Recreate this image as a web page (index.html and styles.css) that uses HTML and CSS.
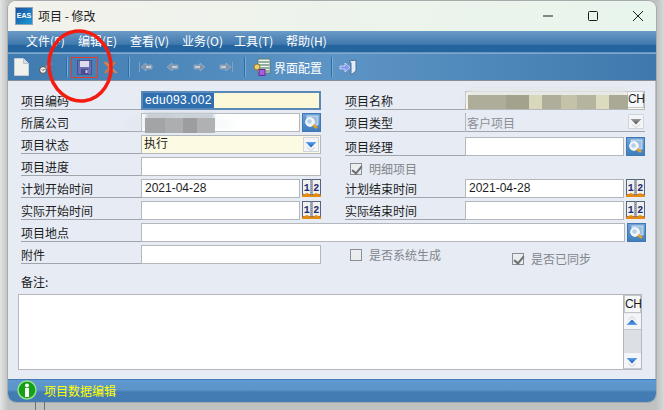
FILE: index.html
```html
<!DOCTYPE html>
<html lang="zh-CN">
<head>
<meta charset="utf-8">
<title>项目 - 修改</title>
<link rel="stylesheet" href="styles.css">
</head>
<body>
<svg class="defs" width="0" height="0" aria-hidden="true">
  <defs>
    <linearGradient id="btnblue" x1="0" y1="0" x2="0" y2="1"><stop offset="0" stop-color="#6fa3d6"/><stop offset="1" stop-color="#3e7cbc"/></linearGradient>
    <linearGradient id="arrow" x1="0" y1="0" x2="0" y2="1"><stop offset="0" stop-color="#5fa4ea"/><stop offset="1" stop-color="#1358b8"/></linearGradient>
    <symbol id="search" viewBox="0 0 19 19">
      <rect x=".5" y=".5" width="18" height="18" fill="url(#btnblue)" stroke="#3f78b4"/>
      <rect x="5" y="3" width="11" height="9" fill="#9dbfe0" stroke="#dfeaf5" stroke-width=".8"/>
      <circle cx="8" cy="9" r="4.300" fill="#eef4fb" stroke="#fff"/>
      <circle cx="7.500" cy="8.500" r="2.300" fill="#b6d0ea"/>
      <path d="M11 12l4 3" stroke="#e8a020" stroke-width="2.600"/>
    </symbol>
    <symbol id="cal" viewBox="0 0 19 19">
      <rect x=".5" y=".5" width="8.500" height="15" fill="#f0f1ee" stroke="#56647e"/>
      <rect x="10" y=".5" width="8.500" height="15" fill="#f0f1ee" stroke="#56647e"/>
      <path d="M0 18v-2l5-2 4 2h1l4-2 5 2v2z" fill="#e58a10"/>
      <path d="M9.500 2v13" stroke="#aab0ba" stroke-dasharray="1 1"/>
      <text x="4.800" y="11.500" class="cal-num">1</text>
      <text x="14.300" y="11.500" class="cal-num">2</text>
    </symbol>
    <symbol id="down" viewBox="0 0 16 16">
      <path d="M2.500 5h11L8 10.500z" fill="url(#arrow)"/>
      <path d="M4 10.500l4 3 4-3" fill="none" stroke="#cdd3da"/>
    </symbol>
    <symbol id="nav" viewBox="0 0 12 10">
      <path d="M0 5l5-4v2h6v4H5v2z" fill="#7f95ad" stroke="#a9b7c6" stroke-width=".6"/>
      <path d="M5 4h5v2H5" fill="#c6ccd4"/>
    </symbol>
  </defs>
</svg>

<div class="desktop">
  <div class="window">
    <header class="titlebar">
      <span class="appicon">EAS</span>
      <span class="title">项目 - 修改</span>
      <div class="winbtns">
        <svg class="winbtn" viewBox="0 0 12 12"><path d="M1 6h10" stroke="#1a1a1a" fill="none"/></svg>
        <svg class="winbtn" viewBox="0 0 12 12"><rect x="1.500" y="1.500" width="9" height="9" rx="1" fill="none" stroke="#1a1a1a"/></svg>
        <svg class="winbtn" viewBox="0 0 12 12"><path d="M1 1l10 10M11 1L1 11" stroke="#1a1a1a" fill="none"/></svg>
      </div>
    </header>

    <nav class="menubar">
      <span class="menu">文件(F)</span>
      <span class="menu">编辑(E)</span>
      <span class="menu">查看(V)</span>
      <span class="menu">业务(O)</span>
      <span class="menu">工具(T)</span>
      <span class="menu">帮助(H)</span>
    </nav>

    <div class="toolbar">
      <span class="tool tool-new"><svg width="15" height="18" viewBox="0 0 15 18"><path d="M.5.500h9l5 5v12H.5z" fill="#f0f0ec" stroke="#c4ccd4"/><path d="M9.500.500v5h5" fill="#d8dde2" stroke="#b8c0c8"/></svg></span>
      <span class="tool tool-open"><svg width="14" height="14" viewBox="0 0 14 14"><circle cx="4" cy="10" r="3.400" fill="#f3f3f3" stroke="#4a4a4a"/><path d="M3 9.500l1 1 1.500-1.500" stroke="#333" fill="none"/><path d="M6 7l5-5 2 2-5 5z" fill="#8d97a2"/></svg></span>
      <span class="sep sep-a"></span>
      <span class="tool tool-save"><svg width="15" height="15" viewBox="0 0 15 15"><path d="M.5.500h14v14H.5z" fill="#6a6cb4" stroke="#4a4c8c"/><rect x="3" y="1" width="9" height="6" fill="#dcdcec"/><rect x="4" y="9" width="7" height="5" fill="#4a4c90"/><rect x="8.500" y="10" width="2" height="3" fill="#c8c8e0"/></svg></span>
      <span class="tool tool-x"><svg width="15" height="13" viewBox="0 0 15 13"><path d="M1 1l12 11M12 1L2 12" stroke="#e0733a" stroke-width="2" fill="none"/><path d="M3 1l11 11" stroke="#c9a080" fill="none"/></svg></span>
      <span class="sep sep-b"></span>
      <span class="tool tool-first"><svg width="14" height="10" viewBox="0 0 14 10"><path d="M.5 0v10" stroke="#8ba0b6"/><use href="#nav" x="2" width="12" height="10"/></svg></span>
      <span class="tool tool-prev"><svg width="12" height="10"><use href="#nav" width="12" height="10"/></svg></span>
      <span class="tool tool-next"><svg class="flip" width="12" height="10"><use href="#nav" width="12" height="10"/></svg></span>
      <span class="tool tool-last"><svg class="flip" width="14" height="10" viewBox="0 0 14 10"><path d="M.5 0v10" stroke="#8ba0b6"/><use href="#nav" x="2" width="12" height="10"/></svg></span>
      <span class="sep sep-c"></span>
      <span class="tool tool-cfg">
        <svg width="18" height="18" viewBox="0 0 18 18"><rect x="5" y="1" width="12" height="14" fill="#f4f6f2" stroke="#5d7a70"/><path d="M6 4h10M6 7h10M6 10h10M6 13h10" stroke="#2f6b4a"/><circle cx="4" cy="9" r="3" fill="#e9cf6a" stroke="#8d7a30"/><rect x="6" y="11.500" width="6" height="6" fill="#a45ed8" stroke="#6a2a9a"/></svg>
        <span class="tool-text">界面配置</span>
      </span>
      <span class="sep sep-d"></span>
      <span class="tool tool-exit"><svg width="18" height="17" viewBox="0 0 18 17"><path d="M10 2l7-1v11l-5 4V4z" fill="#e4edf7" stroke="#4c6f96"/><path d="M1 7h5V4l5 4.500L6 13v-3H1z" fill="#8494f0" stroke="#e6ebfc" stroke-width=".7"/></svg></span>
    </div>

    <main class="form">
      <div class="grid">
        <label class="lbl">项目编码</label>
        <div class="ctrl"><div class="field field-focus"><span class="selected">edu093.002</span></div></div>
        <label class="lbl lbl-right">项目名称</label>
        <div class="ctrl ctrl-name"><div class="field field-yellow"></div><span class="ch ch-name">CH</span></div>

        <label class="lbl">所属公司</label>
        <div class="ctrl"><div class="field"></div><svg class="pick"><use href="#search"/></svg></div>
        <label class="lbl lbl-right">项目类型</label>
        <div class="ctrl ctrl-flat"><div class="field field-plain">客户项目</div><span class="combo combo-grey"><svg width="16" height="16"><use href="#down"/></svg></span></div>

        <label class="lbl">项目状态</label>
        <div class="ctrl"><div class="field field-yellow combo-field">执行<span class="combo"><svg width="16" height="16"><use href="#down"/></svg></span></div></div>
        <label class="lbl lbl-right lbl-low">项目经理</label>
        <div class="ctrl ctrl-low"><div class="field"></div><svg class="pick"><use href="#search"/></svg></div>

        <label class="lbl">项目进度</label>
        <div class="ctrl"><div class="field"></div></div>
        <div class="check check-detail"><span class="box checked"></span>明细项目</div>

        <label class="lbl lbl-first">计划开始时间</label>
        <div class="ctrl"><div class="field">2021-04-28</div><svg class="pick"><use href="#cal"/></svg></div>
        <label class="lbl lbl-right">计划结束时间</label>
        <div class="ctrl"><div class="field">2021-04-28</div><svg class="pick"><use href="#cal"/></svg></div>

        <label class="lbl">实际开始时间</label>
        <div class="ctrl"><div class="field"></div><svg class="pick"><use href="#cal"/></svg></div>
        <label class="lbl lbl-right">实际结束时间</label>
        <div class="ctrl"><div class="field"></div><svg class="pick"><use href="#cal"/></svg></div>

        <label class="lbl">项目地点</label>
        <div class="ctrl ctrl-span"><div class="field"></div><svg class="pick"><use href="#search"/></svg></div>

        <label class="lbl">附件</label>
        <div class="ctrl"><div class="field"></div></div>
        <div class="checks">
          <div class="check check-sys"><span class="box"></span>是否系统生成</div>
          <div class="check check-sync"><span class="box checked"></span>是否已同步</div>
        </div>
      </div>

      <div class="remark-label">备注:</div>
      <div class="remark">
        <div class="remark-area"></div>
        <div class="scroll">
          <span class="ch ch-remark">CH</span>
          <span class="sbtn sbtn-up"><svg width="16" height="16"><use href="#down"/></svg></span>
          <span class="strack"></span>
          <span class="sbtn sbtn-down"><svg width="16" height="16"><use href="#down"/></svg></span>
        </div>
      </div>
    </main>

    <footer class="statusbar">
      <svg class="info" viewBox="0 0 20 20"><circle cx="10" cy="10" r="9" fill="#16a016" stroke="#8fe08f" stroke-width="1.500"/><rect x="8" y="8" width="4" height="9" fill="#fff"/><circle cx="10" cy="5.500" r="2" fill="#fff"/></svg>
      <span class="status-text">项目数据编辑</span>
    </footer>
  </div>
  <div class="taskbar-lines"></div>
</div>

<div class="mosaic mosaic-company"></div>
<div class="mosaic mosaic-name"></div>
<svg class="annot" width="664" height="410" viewBox="0 0 664 410"><ellipse cx="80" cy="66" rx="31" ry="35" transform="rotate(-8 80 66)" fill="none" stroke="#f41c10" stroke-width="3.500"/></svg>
</body>
</html>
```
FILE: styles.css
```css
* { box-sizing: border-box; }
html, body { margin: 0; padding: 0; }
body {
  position: relative;
  width: 664px;
  height: 410px;
  overflow: hidden;
  font: 12px/19px "Noto Sans CJK SC", "Liberation Sans", sans-serif;
  color: #1c1c1c;
  background: #c6c9c8;
}
.defs { position: absolute; }
.desktop {
  height: 410px;
  padding: 1px 8px 0;
  background: linear-gradient(90deg, #e3e5e4 0, #bfc2c1 8px, #bfc2c1 656px, #d6d8d7 100%);
}
.window {
  display: flex;
  flex-direction: column;
  width: 648px;
  height: 401px;
  border-radius: 8px;
  overflow: hidden;
  box-shadow: 0 0 0 1px #a8abab;
  background: #e6ebf4;
}
.titlebar {
  display: flex;
  align-items: center;
  flex: 0 0 30px;
  padding: 0 0 1px 8px;
  background: linear-gradient(90deg, #f3f2ec 0, #eef3ec 40%, #e8f5ec 100%);
}
.appicon {
  width: 16px;
  height: 16px;
  font: bold 7px/16px "Liberation Sans", sans-serif;
  text-align: center;
  color: #fff;
  background: linear-gradient(135deg, #1e4f9c, #1a9ad8);
  outline: 1px solid #8fa3b8;
}
.title { margin-left: 6px; font-size: 12px; color: #222; }
.winbtns { display: flex; margin-left: auto; padding-right: 12px; }
.winbtn { width: 12px; height: 12px; margin-left: 33px; }

.menubar {
  display: flex;
  flex: 0 0 23px;
  padding-left: 18px;
  color: #fff;
  line-height: 20px;
  background: linear-gradient(180deg, #6b9ac6 0, #4079ae 58%, #24659f 62%, #24659f 92%, #7fa8cc 94%, #7fa8cc 100%);
}
.menu { width: 52px; white-space: nowrap; }

.toolbar {
  display: flex;
  align-items: center;
  flex: 0 0 27px;
  background: linear-gradient(90deg, #3f7ab0 0, #5c95c5 50%, #3f78ac 100%);
  border-bottom: 1px solid #8c8f92;
}
.tool { display: flex; align-items: center; justify-content: center; height: 21px; }
.tool-new { width: 26px; }
.tool-open { width: 24px; }
.tool-save { width: 27px; border: 1px solid #e53a30; }
.tool-x { width: 24px; }
.tool-first { width: 28px; margin-left: 3px; }
.tool-prev { width: 25px; }
.tool-next { width: 28px; }
.tool-last { width: 26px; }
.tool-cfg { margin-left: 8px; justify-content: flex-start; }
.tool-exit { margin-left: 7px; }
.tool-text { margin-left: 3px; color: #fff; font-size: 12px; }
.flip { transform: scaleX(-1); }
.sep { width: 1px; height: 20px; background: #2a6ea8; box-shadow: 1px 0 0 #7cabd2; }
.sep-a { margin: 0 4px 0 8px; }
.sep-b { margin-left: 6px; }
.sep-c { margin-left: 5px; }
.sep-d { margin-left: 9px; }

.form { flex: 1; padding: 10px 14px 0 10px; border-right: 1px solid #bcc0c4; }
.grid {
  display: grid;
  grid-template-columns: 120px 180px 24px 120px 180px;
  grid-auto-rows: 22px;
  margin-left: 3px;
}
.lbl {
  grid-column: 1;
  height: 19px;
  line-height: 19px;
  border-bottom: 1px solid #a0a5ab;
  white-space: nowrap;
}
.lbl-right { grid-column: 4; }
.lbl-low, .ctrl-low { margin-top: 2px; }
.ctrl { display: flex; gap: 2px; height: 19px; }
.field {
  flex: 1;
  min-width: 0;
  height: 19px;
  padding: 0 3px;
  border: 1px solid #b4b8bc;
  background: #fff;
  line-height: 17px;
  font-family: "Liberation Sans", "Noto Sans CJK SC", sans-serif;
}
.field-focus { border: 2px solid #5a89b8; background: #fdf9d8; padding: 0; line-height: 15px; }
.field-yellow { background: #fdfae3; padding-left: 2px; }
.field-plain { border-width: 0 0 0 1px; background: transparent; color: #8c8f92; padding-left: 1px; line-height: 22px; }
.selected { display: inline-block; padding: 0 2px; color: #fff; background: #2f6fb0; letter-spacing: .35px; }
.combo-field { position: relative; }
.combo { position: absolute; right: 1px; top: 1px; width: 16px; height: 15px; background: #f3f5f8; border: 1px solid #d0d5da; }
.combo svg { display: block; margin: -1px 0 0 -1px; }
.ctrl-flat { position: relative; border-bottom: 1px solid #a0a5ab; }
.combo-grey { top: 1px; right: 1px; }
.combo-grey svg { filter: grayscale(1); }
.pick { flex: 0 0 19px; width: 19px; height: 19px; }
.cal-num { font: bold 10px "Liberation Mono", monospace; fill: #1d2a6e; text-anchor: middle; }
.ctrl-span { grid-column: 2 / span 4; margin-right: -1px; }
.ch {
  display: block;
  border: 1px solid #c2c6ca;
  background: #f6f7f9;
  font: 12px/15px "Liberation Sans", sans-serif;
  text-align: center;
}
.ctrl-name { position: relative; }
.ch-name { position: absolute; right: 1px; top: 0; width: 17px; height: 17px; letter-spacing: -.5px; }
.check {
  display: flex;
  align-items: center;
  gap: 7px;
  height: 19px;
  color: #83868a;
  white-space: nowrap;
}
.check-detail { grid-column: 4; padding-left: 5px; margin-top: 2px; }
.checks {
  grid-column: 4 / span 2;
  display: flex;
  height: 19px;
  margin-left: -1px;
  padding-left: 6px;
}
.check-sync { margin: 4px 0 0 71px; }
.box {
  position: relative;
  width: 12px;
  height: 12px;
  border: 1px solid #8b8e92;
  background: #ecedee;
}
.box.checked::after {
  content: "";
  position: absolute;
  left: 3px;
  top: 0;
  width: 4px;
  height: 8px;
  border: solid #6c6f72;
  border-width: 0 2px 2px 0;
  transform: rotate(40deg);
}
.remark-label { height: 19px; margin: 5px 0 0 3px; line-height: 19px; }
.remark { display: flex; margin-top: 3px; width: 624px; height: 76px; }
.remark-area { flex: 1; background: #fff; border: 1px solid #b4b8bc; }
.scroll { display: flex; flex-direction: column; width: 18px; border: 1px solid #b4b8bc; border-left: 0; }
.ch-remark { height: 18px; line-height: 16px; letter-spacing: -.5px; }
.sbtn { display: block; height: 16px; background: #f3f5f8; border-bottom: 1px solid #c6cad0; }
.sbtn svg { display: block; }
.sbtn-up svg { transform: scaleY(-1); }
.sbtn-up { margin-top: 1px; }
.strack { flex: 1; background: #dcdfe3; }

.statusbar {
  display: flex;
  align-items: center;
  flex: 0 0 21px;
  padding: 0 0 2px 9px;
  border-top: 1px solid #3f7cb8;
  background: linear-gradient(180deg, #6099cf 0, #5a94c9 45%, #437cb2 55%, #437cb2 100%);
}
.info { width: 20px; height: 20px; flex: none; }
.status-text { margin-left: 7px; color: #ffff00; }

.taskbar-lines {
  position: absolute;
  left: 35px;
  top: 402px;
  width: 10px;
  height: 8px;
  border-left: 1px solid #6e7071;
  border-right: 1px solid #6e7071;
}
.mosaic { position: absolute; }
.mosaic-company {
  left: 145px;
  top: 118px;
  width: 70px;
  height: 15px;
  background: linear-gradient(90deg, #a3a4a6 0 28%, #adaeb0 28% 55%, #9c9d9f 55% 75%, #b0b1b3 75% 100%);
  box-shadow: -22px -2px 10px -5px #dfe3e8, 22px -2px 10px -5px #eef1f5, 0 -6px 3px -1px #c3cad2;
}
.mosaic-name {
  left: 468px;
  top: 95px;
  width: 160px;
  height: 14px;
  background: linear-gradient(90deg, #adad9a 0 24%, #a3a38d 24% 38%, #d9d7bc 38% 46%, #aeae9a 46% 58%, #c4c3a8 58% 68%, #b4b49f 68% 80%, #dcdabf 80% 88%, #a9a995 88% 100%);
  box-shadow: 0 -7px 6px -1px #e4e7e5, -6px -3px 6px -3px #e6e8e8;
}
.annot { position: absolute; left: 0; top: 0; }
```
